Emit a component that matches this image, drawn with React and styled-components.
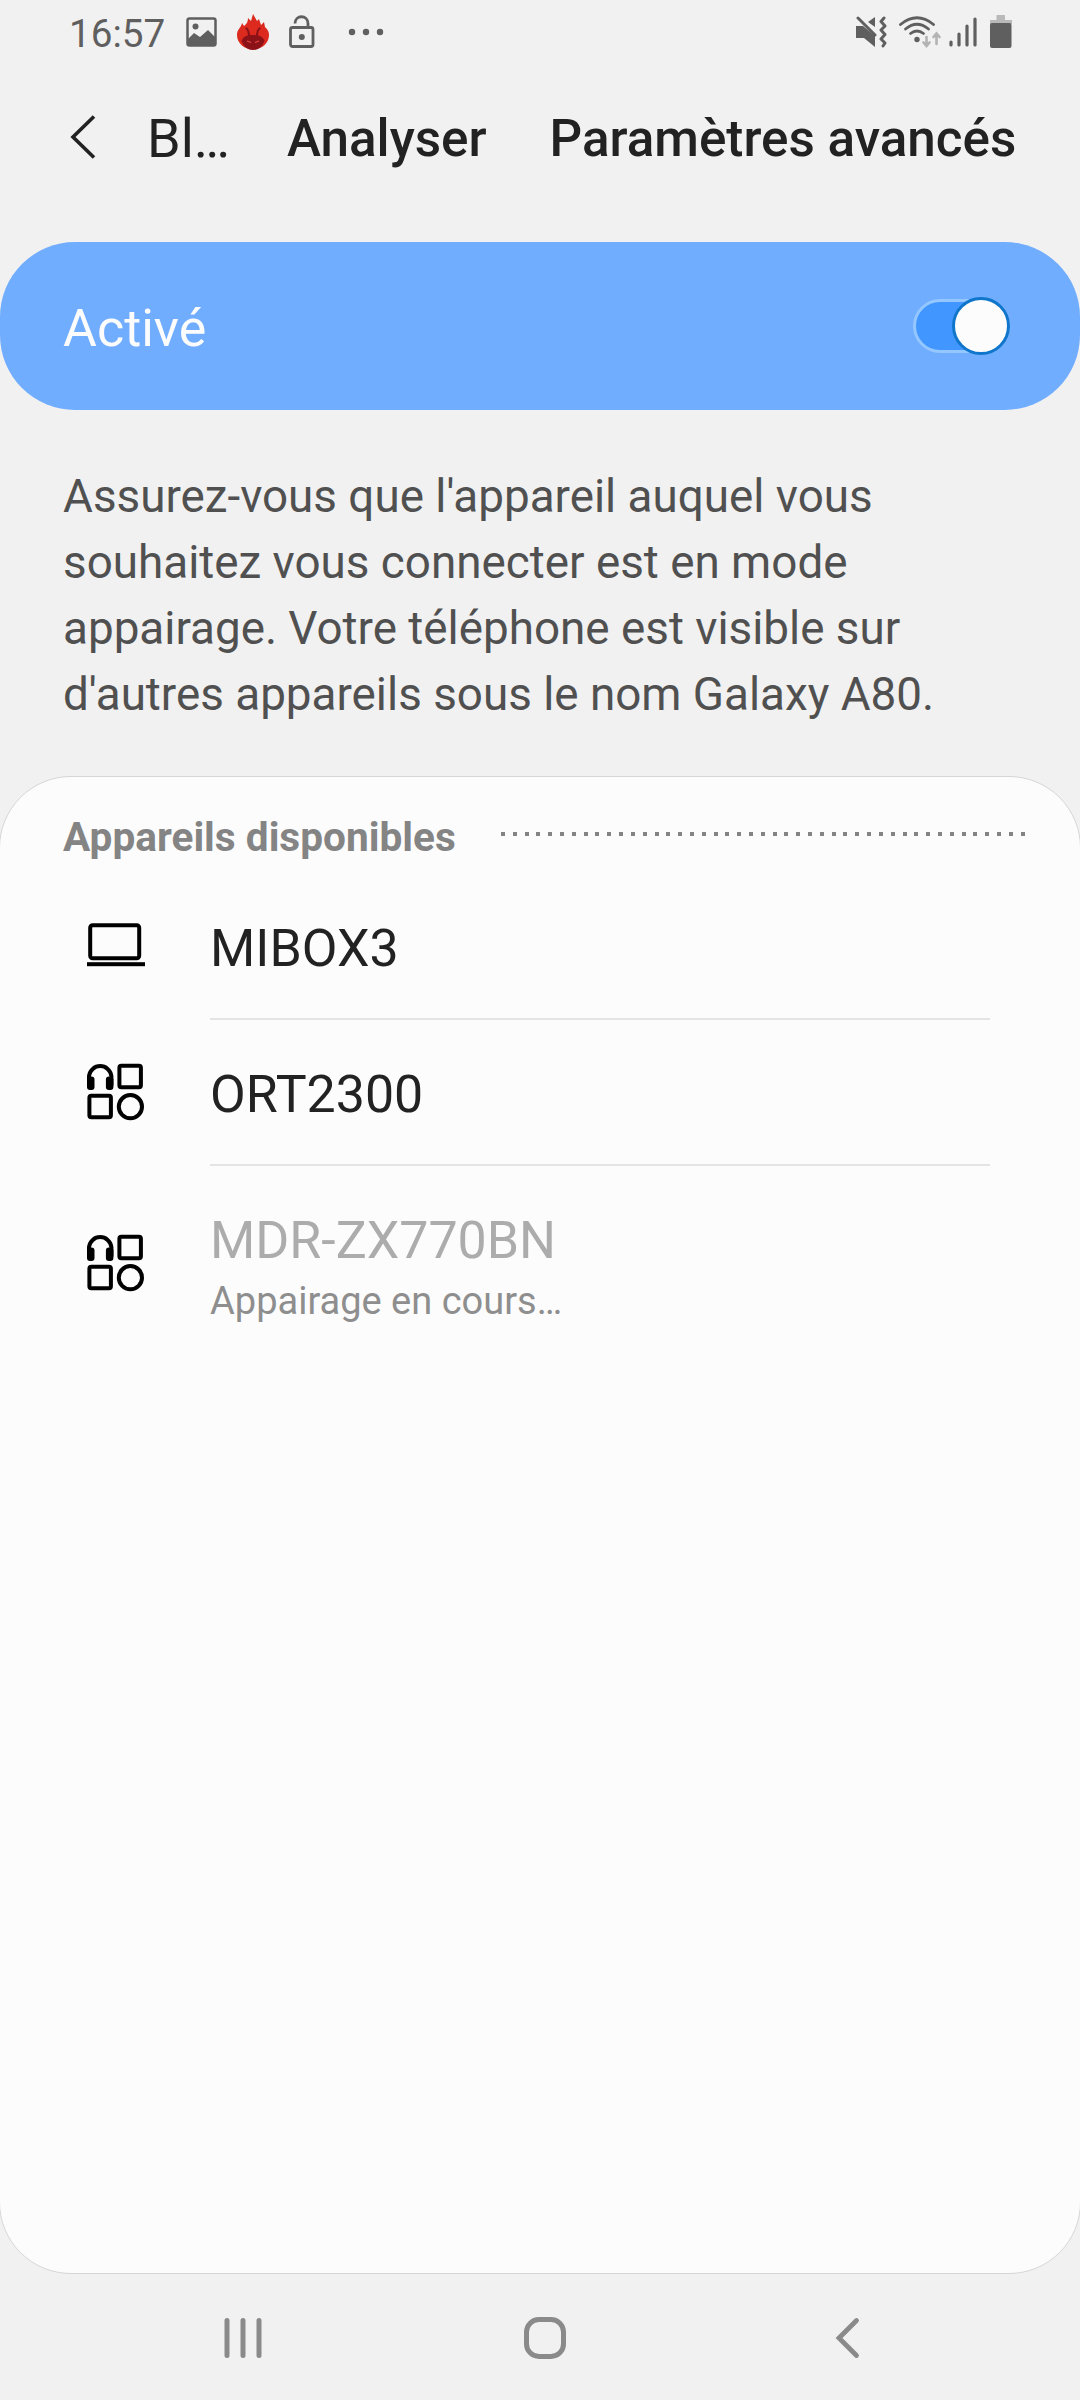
import React from 'react'
import styled, { createGlobalStyle } from 'styled-components'

const devices = [
  { name: 'MIBOX3', icon: 'laptop' },
  { name: 'ORT2300', icon: 'generic' },
  { name: 'MDR-ZX770BN', icon: 'generic', status: 'Appairage en cours…' },
]

function LaptopIcon() {
  return (
    <svg width='60' height='60' viewBox='0.8 0.8 60 60'>
      <rect x='4' y='9' width='49' height='33' rx='2.5' fill='none' stroke='#000' strokeWidth='4' />
      <rect x='0.800' y='46' width='58' height='4' fill='#000' />
    </svg>
  )
}

function GenericIcon() {
  return (
    <svg width='60' height='60' viewBox='0.6 1.6 60 60' fill='none' stroke='#000' strokeWidth='4'>
      <path d='M2.600 24V14.500a11.300 11.300 0 0 1 22.400 0V24' />
      <rect x='0.600' y='15' width='7.500' height='13.500' rx='3' fill='#000' stroke='none' />
      <rect x='19.500' y='15' width='7.500' height='13.500' rx='3' fill='#000' stroke='none' />
      <rect x='33' y='4.300' width='21.500' height='21.500' rx='2' />
      <rect x='3' y='34.300' width='21.500' height='21.500' rx='2' />
      <circle cx='44' cy='45.300' r='11.600' />
    </svg>
  )
}

function FlameIcon() {
  return (
    <svg width='34' height='36' viewBox='0 0 34 36'>
      <path d='M1 21C1 15 5 14 6 9L8 12C11 10 12 7 12 4L15 7L17 0L21 7L23 5L25 11L28 8L29 13C32 16 33 18 33 21C33 29 26 35.500 17 35.500S1 29 1 21Z' fill='#dc2a1e' />
      <path d='M5.500 27C7 22.500 11 21 17 21S27 22.500 28.500 27C26 33 22 36 17 36S8 33 5.500 27Z' fill='#8d1218' />
      <path d='M10.500 14.500q2.500 2 2.500 8M23.500 14.500q-2.500 2-2.500 8' fill='none' stroke='#8d1218' strokeWidth='2.200' strokeLinecap='round' />
      <path d='M11 27l4 1.500M23 27l-4 1.500' stroke='#e04a40' strokeWidth='1.200' />
    </svg>
  )
}

function StatusBar() {
  return (
    <Status>
      <Clock>16:57</Clock>
      <StatusLeft>
        <svg width='31' height='30' viewBox='0 0 31 30'>
          <rect x='1.500' y='1.500' width='28' height='27' rx='2' fill='none' stroke='#5f5f5f' strokeWidth='2.500' />
          <circle cx='9.500' cy='9.500' r='3' fill='#5f5f5f' />
          <path d='M2 22L8 16L14 20L22 13L29 20V28H2Z' fill='#5f5f5f' />
        </svg>
        <FlameIcon />
        <svg width='26' height='34' viewBox='0 0 26 34' fill='none' stroke='#5f5f5f' strokeWidth='2.800'>
          <rect x='1.500' y='12.500' width='22.500' height='19' rx='2' />
          <path d='M6 8.500C6 -0.500 19 -0.500 19 8.500V12.500' />
          <circle cx='12.800' cy='22' r='3' fill='#5f5f5f' stroke='none' />
        </svg>
        <svg width='36' height='8' viewBox='0 0 36 8' fill='#5f5f5f'>
          <circle cx='4' cy='4' r='3.200' />
          <circle cx='18' cy='4' r='3.200' />
          <circle cx='32' cy='4' r='3.200' />
        </svg>
      </StatusLeft>
      <StatusRight>
        <svg width='36' height='32' viewBox='0 0 36 32' fill='#5f5f5f'>
          <path d='M1 10H8L20 20V31L9 22H1Z' />
          <path d='M13 6L20 1V11Z' />
          <path d='M3 2L20 19' stroke='#5f5f5f' strokeWidth='3' strokeLinecap='round' />
          <path d='M29 2L26 5.500L30 10L26 14L30 18.500L26 23L30 27L28 30' fill='none' stroke='#5f5f5f' strokeWidth='3' strokeLinecap='round' strokeLinejoin='round' />
        </svg>
        <svg width='44' height='32' viewBox='0 0 44 32' fill='none' stroke='#5f5f5f' strokeWidth='2.800' strokeLinecap='round'>
          <path d='M2.500 8.500Q19 -5 35.500 8.500' />
          <path d='M7.500 13Q19 3.500 30.500 13' />
          <path d='M12.500 17.500Q19 12.500 25.500 17.500' />
          <circle cx='19' cy='23.500' r='2.700' fill='#5f5f5f' stroke='none' />
          <path d='M28.500 21V29M25.500 26.500L28.500 30L31.500 26.500M38.500 28V18M35.500 21L38.500 17.500L41.500 21' stroke='#b3b3b3' strokeWidth='2.600' />
        </svg>
        <svg width='34' height='30' viewBox='0 0 34 30' stroke='#5f5f5f' strokeWidth='3.200' strokeLinecap='round'>
          <path d='M2 25V28M10 17V28M18 9V28M26 2V28' />
        </svg>
        <svg width='22' height='33' viewBox='0 0 22 33'>
          <path d='M6.500 0H15V5H22V9H0V5H6.500Z' fill='#b9b9b9' />
          <rect y='8' width='21.500' height='25' rx='2' fill='#5f5f5f' />
        </svg>
      </StatusRight>
    </Status>
  )
}

function App() {
  return (
    <Screen>
      <GlobalStyle />
      <StatusBar />
      <Header>
        <svg width='26' height='44' viewBox='0 0 26 44' fill='none' stroke='#222' strokeWidth='3.600'>
          <path d='M24 1.500L3 22L24 42.500' />
        </svg>
        <Title>Bl…</Title>
        <Action>Analyser</Action>
        <Action>Paramètres avancés</Action>
      </Header>
      <SwitchBar>
        <SwitchLabel>Activé</SwitchLabel>
        <Track>
          <Thumb />
        </Track>
      </SwitchBar>
      <Description>
        Assurez-vous que l'appareil auquel vous<br />
        souhaitez vous connecter est en mode<br />
        appairage. Votre téléphone est visible sur<br />
        d'autres appareils sous le nom Galaxy A80.
      </Description>
      <Panel>
        <SectionHeader>
          <SectionTitle>Appareils disponibles</SectionTitle>
          <DottedLine />
        </SectionHeader>
        {devices.map((device) => (
          <Device key={device.name} $tall={!!device.status}>
            <DeviceIcon>{device.icon === 'laptop' ? <LaptopIcon /> : <GenericIcon />}</DeviceIcon>
            <DeviceBody $last={!!device.status}>
              <DeviceName $muted={!!device.status}>{device.name}</DeviceName>
              {device.status && <DeviceStatus>{device.status}</DeviceStatus>}
            </DeviceBody>
          </Device>
        ))}
      </Panel>
      <NavBar>
        <svg width='42' height='44' viewBox='0 0 42 44' stroke='#8a8a8a' strokeWidth='5' strokeLinecap='round'>
          <path d='M5 4.500V39.500M21 4.500V39.500M37 4.500V39.500' />
        </svg>
        <HomeIcon width='44' height='44' viewBox='0 0 44 44'>
          <rect x='3.500' y='3.500' width='37' height='37' rx='12.500' fill='none' stroke='#8a8a8a' strokeWidth='5' />
        </HomeIcon>
        <svg width='28' height='44' viewBox='0 0 28 44' fill='none' stroke='#8a8a8a' strokeWidth='4.800' strokeLinecap='round'>
          <path d='M22.500 4.500L5 22L22.500 39.500' />
        </svg>
      </NavBar>
    </Screen>
  )
}

export default App

const GlobalStyle = createGlobalStyle`
  body {
    margin: 0;
    background-color: #f1f1f1;
    font-family: Roboto, 'Noto Sans', sans-serif;
  }

  svg {
    display: block;
    flex-shrink: 0;
  }
`

const Screen = styled.div`
  width: 1080px;
  height: 2400px;
  display: flex;
  flex-direction: column;
  overflow: hidden;
  background-color: #f1f1f1;
`

const Status = styled.div`
  display: flex;
  align-items: center;
  height: 63px;
  box-sizing: border-box;
  padding: 0 68px 0 69px;
`

const Clock = styled.span`
  width: 95px;
  font-size: 38.7px;
  line-height: 44px;
  color: #5f5f5f;
  padding-top: 4px;
`

const StatusLeft = styled.div`
  display: flex;
  align-items: center;
  gap: 19px;
  margin-left: 22px;

  svg:last-child {
    margin-left: 14px;
  }
`

const StatusRight = styled.div`
  display: flex;
  align-items: center;
  gap: 7px;
  margin-left: auto;
`

const Header = styled.header`
  display: flex;
  align-items: center;
  height: 148px;
  padding-left: 70px;
  color: #222;
`

const Title = styled.h1`
  width: 137px;
  margin: 0 0 0 51px;
  padding-top: 3px;
  font-size: 54px;
  font-weight: 400;
  line-height: 64px;
`

const Action = styled.button`
  border: none;
  background: none;
  padding: 4px 0 0;
  margin: 0 60px 0 3px;
  font-family: inherit;
  font-size: 51.2px;
  font-weight: 500;
  line-height: 60px;
  color: inherit;
  white-space: nowrap;
`

const SwitchBar = styled.div`
  display: flex;
  align-items: center;
  justify-content: space-between;
  height: 168px;
  margin-top: 31px;
  padding: 0 70px 0 63px;
  box-sizing: border-box;
  border-radius: 75px;
  background-color: #71adff;
`

const SwitchLabel = styled.span`
  font-size: 52px;
  line-height: 62px;
  padding-top: 6px;
  color: #fcfcfc;
`

const Track = styled.div`
  display: flex;
  align-items: center;
  justify-content: flex-end;
  width: 97px;
  height: 54px;
  box-sizing: border-box;
  border: 3px solid #94c7ff;
  border-radius: 27px;
  background-color: #4196ff;
`

const Thumb = styled.div`
  flex-shrink: 0;
  width: 58px;
  height: 58px;
  box-sizing: border-box;
  margin-right: -3px;
  border: 3px solid #0f76cc;
  border-radius: 50%;
  background-color: #fcfcfc;
`

const Description = styled.p`
  margin: 54px 0 0 63px;
  height: 312px;
  font-size: 45.8px;
  line-height: 66px;
  color: #505050;
  white-space: nowrap;
`

const Panel = styled.section`
  height: 1498px;
  box-sizing: border-box;
  margin: 0 -1px;
  border: 1px solid #d6d6d6;
  border-radius: 72px;
  background-color: #fcfcfc;
`

const SectionHeader = styled.div`
  display: flex;
  align-items: center;
  height: 97px;
  padding: 0 54px 0 63px;
`

const SectionTitle = styled.h2`
  width: 394px;
  margin: 22px 44px 0 0;
  font-size: 40.6px;
  font-weight: 700;
  line-height: 48px;
  color: #848484;
  white-space: nowrap;
`

const DottedLine = styled.div`
  flex: 1;
  height: 4px;
  margin-top: 17px;
  background: repeating-linear-gradient(90deg, #848484 0 4px, transparent 4px 11.81px);
`

const Device = styled.div`
  display: flex;
  align-items: center;
  height: ${(props) => (props.$tall ? '196px' : '146px')};
  padding: 0 90px 0 87px;
`

const DeviceIcon = styled.div`
  width: 123px;
`

const DeviceBody = styled.div`
  flex: 1;
  height: 100%;
  box-sizing: border-box;
  display: flex;
  flex-direction: column;
  justify-content: center;
  padding-top: ${(props) => (props.$last ? '8px' : '5px')};
  border-bottom: ${(props) => (props.$last ? 'none' : '2px solid #e4e4e4')};
`

const DeviceName = styled.span`
  font-size: 51.9px;
  line-height: 62px;
  color: ${(props) => (props.$muted ? '#acacac' : '#222')};
`

const DeviceStatus = styled.span`
  margin-top: 4px;
  font-size: 38px;
  line-height: 50px;
  color: #8e8e8e;
`

const NavBar = styled.nav`
  display: flex;
  align-items: center;
  justify-content: space-between;
  height: 126px;
  padding: 2px 218px 0 222px;
  box-sizing: border-box;
`

const HomeIcon = styled.svg`
  margin-right: 8px;
`
